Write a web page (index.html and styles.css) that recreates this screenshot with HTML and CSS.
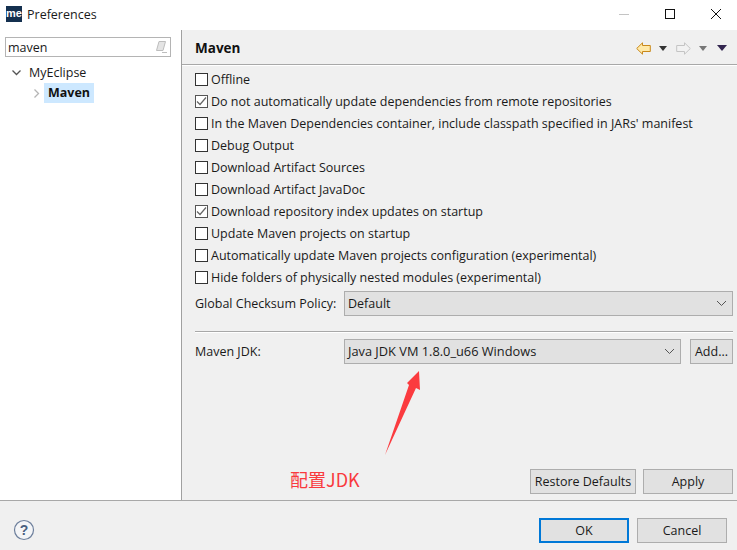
FILE: index.html
```html
<!DOCTYPE html>
<html lang="en">
<head>
<meta charset="utf-8">
<title>Preferences</title>
<link rel="stylesheet" href="styles.css">
</head>
<body>
<div class="window">
  <header class="titlebar">
    <div class="logo">me</div>
    <div class="title">Preferences</div>
    <div class="winctrls">
      <svg class="winbtn" width="12" height="12" viewBox="0 0 12 12"><path d="M1 6.5H11" stroke="#c4c4c4" fill="none"/></svg>
      <svg class="winbtn" width="12" height="12" viewBox="0 0 12 12"><rect x="1.5" y="1.5" width="9" height="9" stroke="#111" fill="none"/></svg>
      <svg class="winbtn" width="12" height="12" viewBox="0 0 12 12"><path d="M1 1L11 11M11 1L1 11" stroke="#111" fill="none"/></svg>
    </div>
  </header>
  <div class="content">
    <aside class="sidebar">
      <div class="search">
        <span class="search-text">maven</span>
        <svg width="14" height="14" viewBox="0 0 14 14"><path d="M5 1.5H11.5L9 10.5H2.5Z" fill="#e4e4e4" stroke="#bdbdbd"/><path d="M8 12.5H13" stroke="#bdbdbd"/></svg>
      </div>
      <div class="tree-row">
        <svg class="chev" width="11" height="11" viewBox="0 0 11 11"><path d="M1.5 3.5L5.5 7.5L9.5 3.5" stroke="#555" stroke-width="1.3" fill="none"/></svg>
        <span>MyEclipse</span>
      </div>
      <div class="tree-row tree-child">
        <svg class="chev" width="11" height="11" viewBox="0 0 11 11"><path d="M3.5 1.5L7.5 5.5L3.5 9.5" stroke="#b5b5b5" stroke-width="1.3" fill="none"/></svg>
        <span class="selected">Maven</span>
      </div>
    </aside>
    <main class="main">
      <div class="main-header">
        <h1 class="heading">Maven</h1>
        <div class="nav">
          <svg width="15" height="13" viewBox="0 0 15 13"><path d="M0.7 6.5L6.5 0.8V3.5H14.3V9.5H6.5V12.2Z" fill="#ffe9a8" stroke="#c9891c"/></svg>
          <svg width="8" height="5" viewBox="0 0 8 5"><path d="M0 0H8L4 5Z" fill="#333"/></svg>
          <svg class="gap-a" width="15" height="13" viewBox="0 0 15 13"><path d="M14.3 6.5L8.5 0.8V3.5H0.7V9.5H8.5V12.2Z" fill="#f2f2f2" stroke="#c4c4c4"/></svg>
          <svg width="8" height="5" viewBox="0 0 8 5"><path d="M0 0H8L4 5Z" fill="#777"/></svg>
          <svg class="gap-b" width="10" height="6" viewBox="0 0 10 6"><path d="M0 0H10L5 6Z" fill="#33264f"/></svg>
        </div>
      </div>
      <div class="panel">
        <div class="checks">
          <label class="check"><span class="box"></span>Offline</label>
          <label class="check"><span class="box on"><svg width="11" height="11" viewBox="0 0 11 11"><path d="M1 5.5L4 8.5L10 1.5" stroke="#666" stroke-width="1.2" fill="none"/></svg></span>Do not automatically update dependencies from remote repositories</label>
          <label class="check"><span class="box"></span>In the Maven Dependencies container, include classpath specified in JARs' manifest</label>
          <label class="check"><span class="box"></span>Debug Output</label>
          <label class="check"><span class="box"></span>Download Artifact Sources</label>
          <label class="check"><span class="box"></span>Download Artifact JavaDoc</label>
          <label class="check"><span class="box on"><svg width="11" height="11" viewBox="0 0 11 11"><path d="M1 5.5L4 8.5L10 1.5" stroke="#666" stroke-width="1.2" fill="none"/></svg></span>Download repository index updates on startup</label>
          <label class="check"><span class="box"></span>Update Maven projects on startup</label>
          <label class="check"><span class="box"></span>Automatically update Maven projects configuration (experimental)</label>
          <label class="check"><span class="box"></span>Hide folders of physically nested modules (experimental)</label>
        </div>
        <div class="field field-top">
          <span class="field-label">Global Checksum Policy:</span>
          <div class="select select-wide"><span>Default</span><svg width="11" height="7" viewBox="0 0 11 7"><path d="M1 1L5.5 5.5L10 1" stroke="#555" fill="none"/></svg></div>
        </div>
        <div class="sep"></div>
        <div class="field">
          <span class="field-label">Maven JDK:</span>
          <div class="select select-jdk"><span class="jdk-text">Java JDK VM 1.8.0_u66 Windows</span><svg width="11" height="7" viewBox="0 0 11 7"><path d="M1 1L5.5 5.5L10 1" stroke="#555" fill="none"/></svg></div>
          <button class="btn btn-add">Add...</button>
        </div>
        <div class="actions">
          <button class="btn btn-restore">Restore Defaults</button>
          <button class="btn btn-apply">Apply</button>
        </div>
      </div>
    </main>
  </div>
  <footer class="footer">
    <svg class="help" width="22" height="22" viewBox="0 0 22 22"><circle cx="11" cy="11" r="9.5" fill="#f4f5f7" stroke="#6d7f9c" stroke-width="1.2"/><text x="11" y="16" text-anchor="middle" class="help-mark">?</text></svg>
    <div class="footer-btns">
      <button class="btn btn-ok">OK</button>
      <button class="btn btn-cancel">Cancel</button>
    </div>
  </footer>
  <svg class="arrow" width="50" height="95" viewBox="0 0 50 95"><path d="M35 0L23 12L25 14L1 84L32 17L36 19Z" fill="#fb3b3f"/></svg>
  <div class="note">配置JDK</div>
</div>
</body>
</html>
```
FILE: styles.css
```css
* { box-sizing: border-box; }
html, body { margin: 0; padding: 0; }
body {
  width: 737px;
  height: 550px;
  overflow: hidden;
  background: #fff;
  font-family: "Open Sans", "Noto Sans", sans-serif;
  font-size: 12.5px;
  color: #1a1a1a;
}
.window { position: relative; width: 737px; height: 550px; display: flex; flex-direction: column; }
.titlebar { height: 30px; display: flex; align-items: center; padding: 0 0 2px 6px; }
.logo {
  width: 16px; height: 16px; background: #14304f; color: #fff;
  font: bold 11px/15px "Liberation Sans", sans-serif; text-align: center;
}
.title { margin-left: 5px; }
.winctrls { margin-left: auto; display: flex; align-items: center; height: 100%; }
.winbtn { margin-right: 33px; }
.winbtn:first-child { margin-right: 34px; }
.winbtn:last-child { margin-right: 15px; margin-left: 1px; }
.content { flex: 1; display: flex; min-height: 0; }
.sidebar { width: 182px; border-right: 1px solid #a0a0a0; padding: 7px 10px 0 5px; background: #fff; }
.search {
  height: 20px; width: 166px; border: 1px solid #b4b4b4; display: flex; align-items: center;
  justify-content: space-between; padding: 0 2px 0 2px;
}
.tree-row { display: flex; align-items: center; height: 20px; margin-top: 5px; padding-left: 6px; }
.tree-row .chev { margin-right: 7px; }
.tree-child { margin-top: 1px; padding-left: 26px; }
.tree-child .chev { margin-right: 2px; }
.selected { background: #cde8ff; font-weight: 700; padding: 0 4px 0 4px; line-height: 20px; color: #111; }
.main { flex: 1; display: flex; flex-direction: column; background: #f0f0f0; min-width: 0; }
.main-header {
  height: 35px; display: flex; align-items: center; justify-content: space-between;
  border-bottom: 1px solid #a8a8a8; padding: 2px 10px 0 13px; box-shadow: 0 1px 0 #fff;
}
.heading { margin: 0; font-size: 13.5px; font-weight: 700; color: #111; }
.nav { display: flex; align-items: center; gap: 8px; }
.gap-a { margin-left: 1px; }
.gap-b { margin-left: 2px; }
.panel { flex: 1; display: flex; flex-direction: column; padding: 3px 4px 0 13px; }
.check { display: flex; align-items: center; height: 22px; }
.box {
  width: 13px; height: 13px; border: 1px solid #333; background: #fff; margin-right: 3px; flex: none;
  display: flex; align-items: center; justify-content: center;
}
.box.on { border-color: #555; }
.field { display: flex; align-items: center; }
.field-top { margin-top: 3px; }
.field-label { width: 149px; flex: none; }
.select {
  height: 25px; border: 1px solid #adadad; background: #e1e1e1; display: flex; align-items: center;
  justify-content: space-between; padding: 0 5px 0 3px;
}
.select-wide { width: 390px; }
.select-jdk { width: 337px; margin-right: 9px; }
.jdk-text { font-size: 12.8px; padding-bottom: 2px; }
.sep { height: 2px; margin: 15px 0 6px; background: #a8a8a8; border-bottom: 1px solid #fff; }
.btn {
  font: inherit; color: #1a1a1a; background: #e1e1e1; border: 1px solid #adadad; padding: 0; height: 25px;
}
.btn-add { width: 43px; }
.actions { margin-top: auto; display: flex; justify-content: flex-end; gap: 7px; padding: 0 0 6px; }
.btn-restore { width: 106px; }
.btn-apply { width: 90px; }
.footer {
  height: 50px; background: #f0f0f0; border-top: 1px solid #a8a8a8; display: flex; align-items: center;
  justify-content: space-between; padding: 9px 10px 0 13px;
}
.help-mark { font: bold 14px "Liberation Sans", sans-serif; fill: #4a5f80; }
.footer-btns { display: flex; gap: 8px; }
.btn-ok { width: 90px; border: 2px solid #0078d7; }
.btn-cancel { width: 90px; }
.arrow { position: absolute; left: 384px; top: 371px; }
.note {
  position: absolute; left: 290px; top: 467px; color: #f93a3e;
  font: 18px/24px "Noto Sans CJK SC", "Noto Sans", sans-serif;
}
```
